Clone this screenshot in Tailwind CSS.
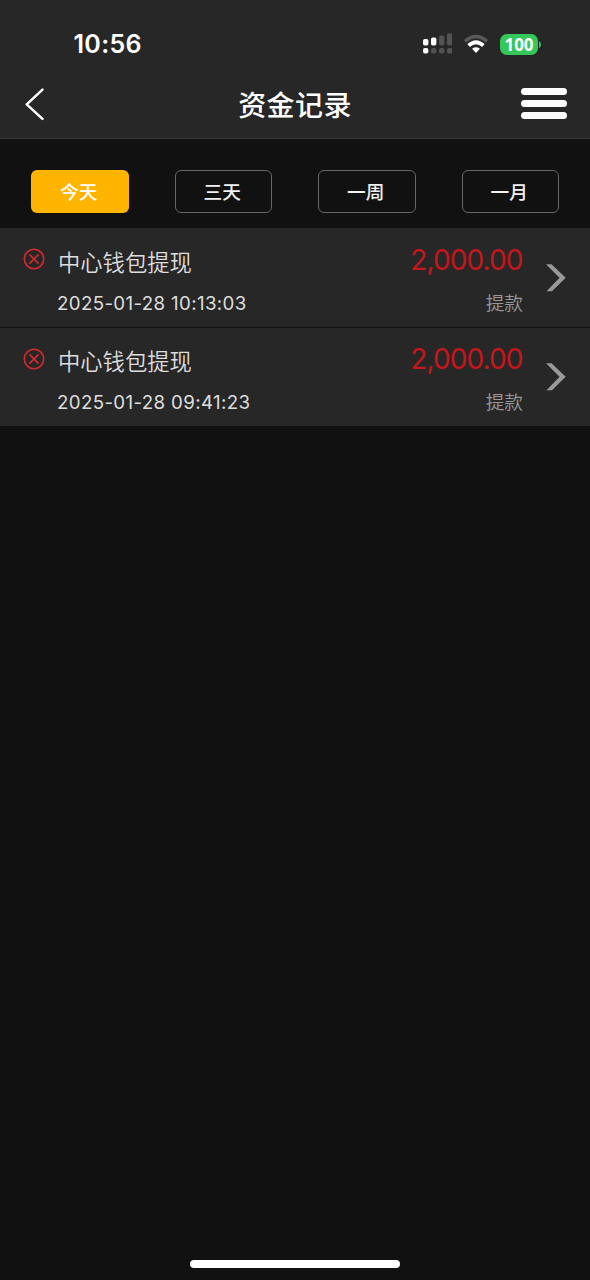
<!DOCTYPE html>
<html lang="zh-CN">
<head>
<meta charset="utf-8">
<meta name="viewport" content="width=device-width, initial-scale=1">
<title>资金记录</title>
<script src="https://cdn.jsdelivr.net/npm/@tailwindcss/browser@4"></script>
</head>
<body class="bg-[#111111]">
<div class="flex h-[1280px] w-[590px] flex-col overflow-hidden bg-[#111111] font-['Inter','Noto_Sans_CJK_SC',sans-serif] text-white">
  <header class="h-[139px] shrink-0 border-b border-[#383838] bg-[#272727]">
    <div class="flex h-[70px] items-center justify-between pt-[18px] pr-[49px] pl-[73.500px]">
      <span class="text-[25px] leading-[30px] font-semibold tracking-[0.300px]">10:56</span>
      <div class="flex items-center">
        <svg class="h-[22px] w-[30px]" viewBox="0 0 30 22">
          <g transform="translate(1 0)">
            <g fill="#fff"><rect x="0" y="6" width="5.4" height="6.500" rx="1.800"/><rect x="8" y="4.500" width="5.4" height="8" rx="1.800"/><rect x="0" y="15" width="5.4" height="5.600" rx="2"/></g>
            <g fill="#535353"><rect x="16" y="2.500" width="5.400" height="10" rx="2"/><rect x="24" y="0.300" width="5.400" height="12.200" rx="2"/><rect x="8" y="15" width="5.400" height="5.600" rx="2"/><rect x="16" y="15" width="5.400" height="5.600" rx="2"/><rect x="24" y="15" width="5.400" height="5.600" rx="2"/></g>
          </g>
        </svg>
        <svg class="ml-[11px] h-[20px] w-[26px]" viewBox="0 0 26 20" fill="none">
          <path d="M2 7.300Q13-2.300 24 7.300" stroke="#5a5a5a" stroke-width="3.500"/>
          <path d="M5.600 11.500Q13 4.900 20.400 11.500" stroke="#fff" stroke-width="3.700"/>
          <path d="M9.100 14.700Q13 12 16.900 14.700L13 19Z" fill="#fff"/>
        </svg>
        <div class="ml-[11px] flex h-[21px] w-[38px] items-center justify-center rounded-[7px] bg-[#34c759] font-['Open_Sans',sans-serif] text-[17px] leading-none font-bold"><span>100</span></div>
        <svg class="ml-px h-[7px] w-[2px]" viewBox="0 0 2 7"><path d="M0 0Q2 1.200 2 3.500T0 7Z" fill="#34c759"/></svg>
      </div>
    </div>
    <div class="flex h-[67px] items-center justify-between pr-[23px] pl-[24px]">
      <svg class="h-[34px] w-[46px]" viewBox="0 0 46 34" fill="none" stroke="#fff" stroke-width="2.500" stroke-linecap="round" stroke-linejoin="round"><path d="M18.500 2.600L2.700 17.300L18.500 31.800"/></svg>
      <h1 class="pt-[4px] pr-px text-[28px] leading-[40px] font-medium tracking-[0.4px]">资金记录</h1>
      <div class="flex w-[46px] flex-col gap-[5px]">
        <span class="h-[7px] rounded-full bg-white"></span>
        <span class="h-[7px] rounded-full bg-white"></span>
        <span class="h-[7px] rounded-full bg-white"></span>
      </div>
    </div>
  </header>
  <nav class="flex h-[89px] shrink-0 items-start justify-between px-[31px] pt-[30.500px] text-[18.700px] font-medium">
    <button class="flex h-[43.500px] w-[97.500px] items-center justify-center rounded-[6px] bg-[#ffb400] pt-[3px] pr-[2px]">今天</button>
    <button class="flex h-[43.500px] w-[97.500px] items-center justify-center rounded-[6px] border border-[#666] pt-[3px] pr-[2px] text-[#f2f2f2]">三天</button>
    <button class="flex h-[43.500px] w-[97.500px] items-center justify-center rounded-[6px] border border-[#666] pt-[3px] pr-[2px] text-[#f2f2f2]">一周</button>
    <button class="flex h-[43.500px] w-[97.500px] items-center justify-center rounded-[6px] border border-[#666] pt-[3px] pr-[2px] text-[#f2f2f2]">一月</button>
  </nav>
  <main>
    <article class="flex h-[100px] border-b border-[#111] bg-[#272727] pl-[23px]">
      <svg class="mt-[20px] size-[22px]" viewBox="0 0 22 22" fill="none" stroke="#d52a2e" stroke-width="1.600"><circle cx="11" cy="11" r="9.700"/><path d="M6.400 6.400L15.600 15.600M15.600 6.400L6.400 15.600"/></svg>
      <div class="ml-[12px] w-[240px] pt-[19px] text-[#dedede]">
        <div class="h-[32px] pl-px text-[22.300px] leading-[32px] font-[350]">中心钱包提现</div>
        <div class="mt-[11px] h-[28px] text-[18.700px] leading-[28px] tracking-[0.360px]">2025-01-28 10:13:03</div>
      </div>
      <div class="flex w-[226px] flex-col items-end pt-[12px]">
        <div class="h-[40px] pr-[0.500px] text-[28px] leading-[40px] tracking-[-0.900px] text-[#c5161c]">2,000.00</div>
        <div class="mt-[10px] h-[28px] text-[18.700px] leading-[28px] font-[350] text-[#999]">提款</div>
      </div>
      <svg class="mt-[35px] ml-[23px] h-[30px] w-[22px]" viewBox="0 0 22 30" fill="#999"><path d="M0 1.200H5.500L19.700 14.700L6 28.300H0.500L13.500 14.700Z"/></svg>
    </article>
    <article class="flex h-[98px] bg-[#272727] pl-[23px]">
      <svg class="mt-[20px] size-[22px]" viewBox="0 0 22 22" fill="none" stroke="#d52a2e" stroke-width="1.600"><circle cx="11" cy="11" r="9.700"/><path d="M6.400 6.400L15.600 15.600M15.600 6.400L6.400 15.600"/></svg>
      <div class="ml-[12px] w-[240px] pt-[18px] text-[#dedede]">
        <div class="h-[32px] pl-px text-[22.300px] leading-[32px] font-[350]">中心钱包提现</div>
        <div class="mt-[11px] h-[28px] text-[18.700px] leading-[28px] tracking-[0.360px]">2025-01-28 09:41:23</div>
      </div>
      <div class="flex w-[226px] flex-col items-end pt-[11px]">
        <div class="h-[40px] pr-[0.500px] text-[28px] leading-[40px] tracking-[-0.900px] text-[#c5161c]">2,000.00</div>
        <div class="mt-[10px] h-[28px] text-[18.700px] leading-[28px] font-[350] text-[#999]">提款</div>
      </div>
      <svg class="mt-[34px] ml-[23px] h-[30px] w-[22px]" viewBox="0 0 22 30" fill="#999"><path d="M0 1.200H5.500L19.700 14.700L6 28.300H0.500L13.500 14.700Z"/></svg>
    </article>
  </main>
  <div class="mt-auto mb-[12px] h-[8px] w-[210px] shrink-0 self-center rounded-full bg-white"></div>
</div>
</body>
</html>
